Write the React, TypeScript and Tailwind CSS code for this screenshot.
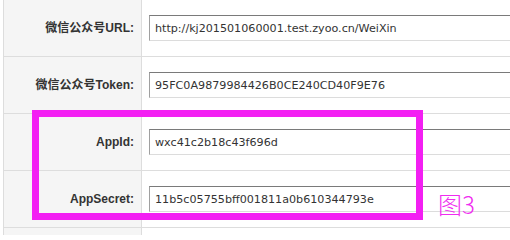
import React from 'react';

const rows = [
  { label: '微信公众号URL:', value: 'http://kj201501060001.test.zyoo.cn/WeiXin' },
  { label: '微信公众号Token:', value: '95FC0A9879984426B0CE240CD40F9E76' },
  { label: 'AppId:', value: 'wxc41c2b18c43f696d' },
  { label: 'AppSecret:', value: '11b5c05755bff001811a0b610344793e' },
];

function FieldRow({ label, value }: { label: string; value: string }) {
  return (
    <div className="flex h-[57px] border-b border-[#dddddd]">
      <div className="w-[138px] shrink-0 bg-[#f5f5f5] border-r border-[#dddddd] flex items-center justify-end pr-[7px]">
        <span className="text-[12px] font-bold text-[#333333] whitespace-nowrap [font-family:'Liberation_Sans','Noto_Sans_CJK_SC',sans-serif]">
          {label}
        </span>
      </div>
      <div className="flex-1 flex items-center pl-[7px]">
        <input
          readOnly
          value={value}
          className="w-[420px] h-[26px] shrink-0 px-[5px] bg-white text-[11.15px] text-[#333333] border border-t-[#7a7a7a] border-l-[#a0a0a0] border-r-[#dcdcdc] border-b-[#dcdcdc] outline-none [font-family:'DejaVu_Sans',sans-serif]"
        />
      </div>
    </div>
  );
}

export default function App() {
  return (
    <div className="relative w-[510px] h-[235px] overflow-hidden bg-white">
      <div className="ml-[3px] border-l border-[#dddddd]">
        {rows.map(r => (
          <FieldRow key={r.label} label={r.label} value={r.value} />
        ))}
        <div className="flex h-[57px]">
          <div className="w-[138px] shrink-0 bg-[#f5f5f5] border-r border-[#dddddd]" />
          <div className="flex-1" />
        </div>
      </div>

      {/* annotation box drawn over the form */}
      <div className="absolute left-[32px] top-[110px] w-[391px] h-[110px] border-[7px] border-[#f31ff3]" />
      <span className="absolute left-[438px] top-[192px] text-[24px] leading-none font-light text-[#f02cf0] [font-family:'Noto_Sans_CJK_SC',sans-serif]">
        图3
      </span>
    </div>
  );
}
